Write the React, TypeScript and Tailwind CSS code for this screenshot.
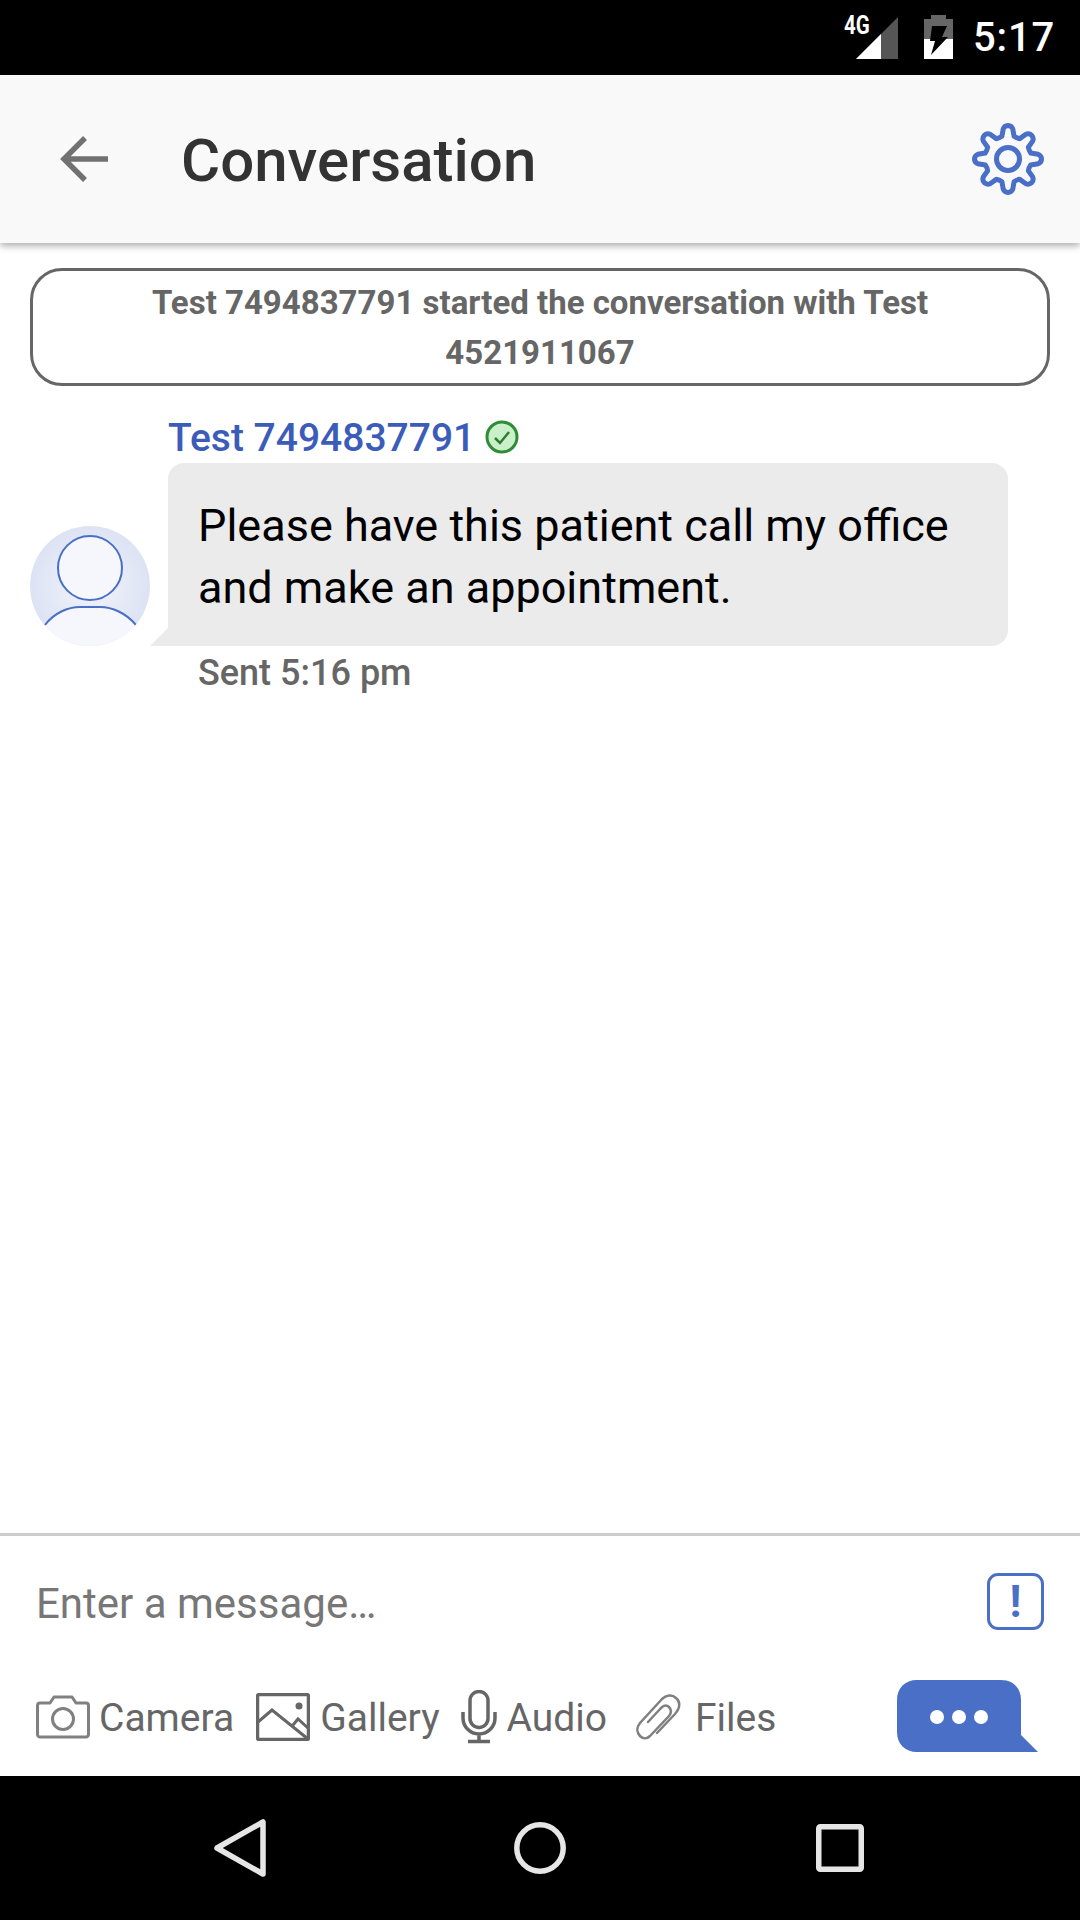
import React from "react";

const gearPath = (() => {
  const cx = 40, cy = 40, ro = 32.5, rr = 23.5;
  const p = (r: number, a: number) => {
    const t = ((a - 90) * Math.PI) / 180;
    return `${(cx + r * Math.cos(t)).toFixed(2)} ${(cy + r * Math.sin(t)).toFixed(2)}`;
  };
  let d = "";
  for (let i = 0; i < 8; i++) {
    const a = i * 45;
    d += `${i === 0 ? "M" : "L"}${p(rr, a - 15)} L${p(ro - 2, a - 9)} Q${p(ro + 1, a - 6)} ${p(ro + 1, a)} Q${p(ro + 1, a + 6)} ${p(ro - 2, a + 9)} L${p(rr, a + 15)} Q${p(rr - 1, a + 22.5)} ${p(rr, a + 30)} `;
  }
  return d + "Z";
})();

function StatusBar() {
  return (
    <div className="h-[75px] bg-black flex items-start justify-end shrink-0 pr-[25px]">
      <div className="relative w-[60px] h-[75px] mr-[26px]">
        <span className="absolute left-[6px] top-[11px] text-white text-[25px] font-bold leading-[30px] scale-x-[0.82] origin-left font-['Roboto',sans-serif]">4G</span>
        <svg className="absolute left-[18px] top-[17px]" width="42" height="42" viewBox="0 0 42 42">
          <path d="M42 0V42H0Z" fill="#555" />
          <path d="M25 17V42H0Z" fill="#fff" />
        </svg>
      </div>
      <svg className="mt-[15px] mr-[20px]" width="29" height="44" viewBox="0 0 29 44">
        <path d="M7 0H22V4H29V44H0V4H7Z" fill="#666" />
        <path d="M0 24H29V44H0Z" fill="#fff" />
        <path d="M8 11H23L18 22H24L7 40L11 26H6Z" fill="#000" />
      </svg>
      <span className="text-white text-[40px] leading-[75px] font-medium tracking-[0.8px]">5:17</span>
    </div>
  );
}

function Header() {
  return (
    <div className="relative z-10 h-[168px] bg-[#f9f9f9] shadow-[0_3px_7px_rgba(0,0,0,0.32)] flex items-center shrink-0 pl-[60px] pr-[35px]">
      <svg width="48" height="50" viewBox="0 0 48 50" className="mr-[73px]">
        <path d="M48 25H6M25 4L4 25L25 46" fill="none" stroke="#717171" strokeWidth="5.5" />
      </svg>
      <span className="flex-1 text-[#333] text-[60px] font-medium leading-none pt-[4px]">Conversation</span>
      <svg width="80" height="80" viewBox="0 0 80 80" className="-mr-[3px]">
        <path d={gearPath} fill="none" stroke="#4a6fc7" strokeWidth="5" strokeLinejoin="round" />
        <circle cx="40" cy="40" r="11.5" fill="none" stroke="#4a6fc7" strokeWidth="5" />
      </svg>
    </div>
  );
}

function Avatar() {
  return (
    <svg width="120" height="120" viewBox="0 0 120 120" className="shrink-0">
      <defs>
        <radialGradient id="avatarBg" cx="50%" cy="50%" r="50%">
          <stop offset="0%" stopColor="#f2f4fb" />
          <stop offset="100%" stopColor="#dde3f4" />
        </radialGradient>
        <clipPath id="avatarClip">
          <circle cx="60" cy="60" r="60" />
        </clipPath>
      </defs>
      <circle cx="60" cy="60" r="60" fill="url(#avatarBg)" />
      <g clipPath="url(#avatarClip)">
        <path d="M15 99C24 87 38 81 50 81H70C82 81 96 87 106 99V120H15Z" fill="#f6f7fd" />
        <path d="M15 99C24 87 38 81 50 81H70C82 81 96 87 106 99" fill="none" stroke="#4a6fc7" strokeWidth="2" />
      </g>
      <circle cx="60" cy="42" r="32" fill="#f6f7fd" stroke="#4a6fc7" strokeWidth="2" />
    </svg>
  );
}

function Message() {
  return (
    <div className="flex-1 bg-white pt-[25px] px-[30px]">
      <div className="h-[118px] border-[3px] border-[#666] rounded-[32px] text-center text-[#666] text-[33px] font-bold leading-[50px] pt-[7px] px-[90px]">
        Test 7494837791 started the conversation with Test 4521911067
      </div>
      <div className="mt-[28px] ml-[138px] flex items-center h-[49px]">
        <span className="text-[#3b5cb8] text-[39px] font-medium leading-[49px]">Test 7494837791</span>
        <svg width="34" height="34" viewBox="0 0 34 34" className="ml-[10px] -mt-[4px]">
          <circle cx="17" cy="17" r="15" fill="#c9f0c9" stroke="#2e8b36" strokeWidth="3" />
          <path d="M10 18L15 23L24 12" fill="none" stroke="#2e7d32" strokeWidth="2.5" />
        </svg>
      </div>
      <div className="flex items-end">
        <Avatar />
        <div className="relative ml-[18px] w-[840px] h-[183px] bg-[#ebebeb] rounded-[16px] rounded-bl-none pl-[30px] pr-[30px] pt-[32px] text-black text-[45px] leading-[62px]">
          <div className="absolute left-[-18px] bottom-0 w-[18px] h-[18px] bg-[#ebebeb] [clip-path:polygon(100%_0,100%_100%,0_100%)]" />
          Please have this patient call my office and make an appointment.
        </div>
      </div>
      <div className="ml-[168px] mt-[5px] text-[#666] text-[36px] font-medium leading-[44px]">Sent 5:16 pm</div>
    </div>
  );
}

function Action({ icon, label, gap }: { icon: React.ReactNode; label: string; gap: string }) {
  return (
    <div className={`flex items-center ${gap}`}>
      {icon}
      <span className="text-[#666] text-[39px] leading-[44px] pt-[2px]">{label}</span>
    </div>
  );
}

function Composer() {
  return (
    <div className="h-[243px] border-t-[3px] border-[#cccccc] bg-white shrink-0">
      <div className="flex items-center justify-between pl-[36px] pr-[36px] pt-[37px] h-[97px]">
        <span className="text-[#777] text-[42px] leading-[50px] pt-[2px]">Enter a message…</span>
        <div className="w-[57px] h-[57px] border-[3px] border-[#4a6fc7] rounded-[11px] flex items-center justify-center text-[#4a6fc7] text-[44px] font-bold leading-none -mt-[3px]">!</div>
      </div>
      <div className="flex items-center pl-[36px] pr-[42px] mt-[47px] h-[72px]">
        <div className="flex items-center flex-1 mt-[1px]">
          <Action
            gap="gap-[9px] mr-[22px]"
            label="Camera"
            icon={
              <svg width="54" height="44" viewBox="0 0 54 44">
                <path d="M4 8H14L18 2H36L40 8H50A2.5 2.5 0 0 1 52.5 10.5V39.5A2.5 2.5 0 0 1 50 42H4A2.5 2.5 0 0 1 1.5 39.5V10.5A2.5 2.5 0 0 1 4 8Z" fill="none" stroke="#808080" strokeWidth="3" strokeLinejoin="round" />
                <circle cx="27" cy="24" r="10.5" fill="none" stroke="#808080" strokeWidth="3" />
              </svg>
            }
          />
          <Action
            gap="gap-[10px] mr-[21px]"
            label="Gallery"
            icon={
              <svg width="54" height="48" viewBox="0 0 54 48">
                <rect x="1.5" y="1.5" width="51" height="45" rx="2" fill="none" stroke="#666" strokeWidth="3.5" />
                <path d="M2 29L16 17L52 46M37 32L42 26L53 36" fill="none" stroke="#666" strokeWidth="3" />
                <circle cx="43" cy="13" r="3.5" fill="#666" />
              </svg>
            }
          />
          <Action
            gap="gap-[10px] mr-[29px]"
            label="Audio"
            icon={
              <svg width="36" height="54" viewBox="0 0 36 54">
                <rect x="9" y="1.5" width="18" height="36" rx="9" fill="none" stroke="#666" strokeWidth="3.5" />
                <path d="M2 22V28A16 16 0 0 0 34 28V22M18 44V51M7 51.5H29" fill="none" stroke="#666" strokeWidth="3.5" />
              </svg>
            }
          />
          <Action
            gap="gap-[14px]"
            label="Files"
            icon={
              <svg width="45" height="46" viewBox="0 0 45 46">
                <path d="M21 39L39 20C45 13 44 7 40 4C36 0 30 1 26 5L4 29C0 34 1 39 4 42C7 45 11 45 14 42L33 22C36 18 35 15 33 13C31 11 28 11 25 14L12 28" fill="none" stroke="#808080" strokeWidth="2.5" strokeLinecap="round" />
              </svg>
            }
          />
        </div>
        <svg width="141" height="72" viewBox="0 0 141 72">
          <path d="M20 0H104C116 0 124 8 124 20V55L141 72H20C8 72 0 64 0 52V20C0 8 8 0 20 0Z" fill="#4a6fc7" />
          <circle cx="40" cy="37" r="7" fill="#fff" />
          <circle cx="62" cy="37" r="7" fill="#fff" />
          <circle cx="84" cy="37" r="7" fill="#fff" />
        </svg>
      </div>
    </div>
  );
}

function NavBar() {
  return (
    <div className="h-[144px] bg-black flex items-center pl-[214px] shrink-0">
      <svg width="52" height="58" viewBox="0 0 52 58" className="mr-[248px]">
        <path d="M3 29L49 3V55Z" fill="none" stroke="#e6e6e6" strokeWidth="5.5" strokeLinejoin="round" />
      </svg>
      <svg width="52" height="52" viewBox="0 0 52 52" className="mr-[250px]">
        <circle cx="26" cy="26" r="23.2" fill="none" stroke="#e6e6e6" strokeWidth="5.5" />
      </svg>
      <svg width="48" height="48" viewBox="0 0 48 48">
        <rect x="2.75" y="2.75" width="42.5" height="42.5" rx="1.5" fill="none" stroke="#e6e6e6" strokeWidth="5.5" />
      </svg>
    </div>
  );
}

export default function App() {
  return (
    <div className="w-[1080px] h-[1920px] flex flex-col bg-white overflow-hidden font-['Roboto',sans-serif]">
      <StatusBar />
      <Header />
      <Message />
      <Composer />
      <NavBar />
    </div>
  );
}
